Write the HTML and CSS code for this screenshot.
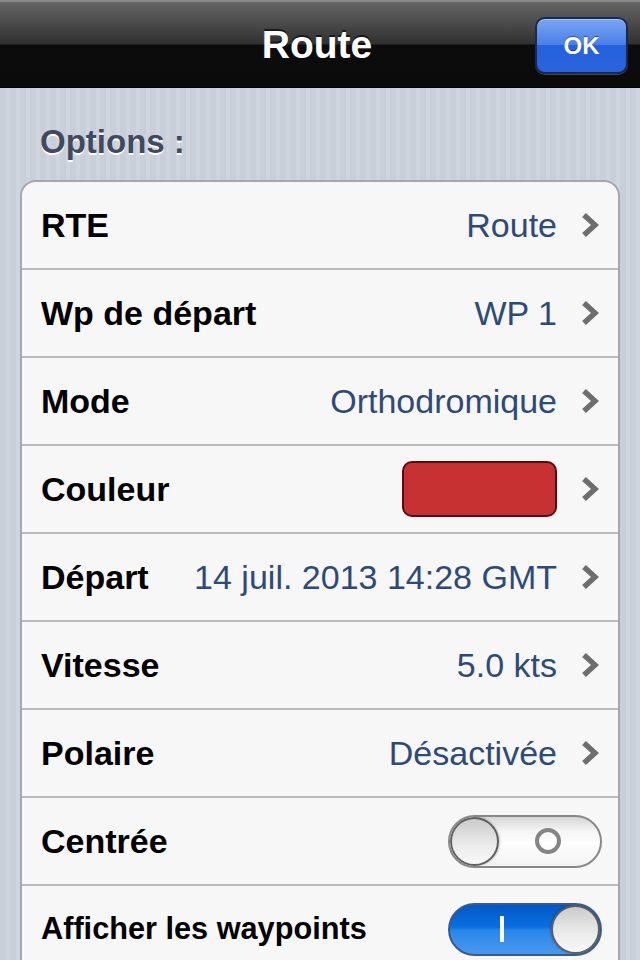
FILE: index.html
```html
<!DOCTYPE html>
<html lang="fr">
<head>
<meta charset="utf-8">
<title>Route</title>
<link rel="stylesheet" href="styles.css">
</head>
<body>
<header class="navbar">
  <span class="spacer"></span>
  <h1 class="title">Route</h1>
  <button class="ok">OK</button>
</header>
<main class="content">
  <h2 class="section-title">Options :</h2>
  <ul class="group">
    <li class="row"><span class="label">RTE</span><span class="value">Route</span><svg class="chevron" viewBox="0 0 18 26"><polyline points="3,3 14,13 3,23"/></svg></li>
    <li class="row"><span class="label">Wp de départ</span><span class="value">WP 1</span><svg class="chevron" viewBox="0 0 18 26"><polyline points="3,3 14,13 3,23"/></svg></li>
    <li class="row"><span class="label">Mode</span><span class="value">Orthodromique</span><svg class="chevron" viewBox="0 0 18 26"><polyline points="3,3 14,13 3,23"/></svg></li>
    <li class="row"><span class="label">Couleur</span><span class="swatch"></span><svg class="chevron" viewBox="0 0 18 26"><polyline points="3,3 14,13 3,23"/></svg></li>
    <li class="row"><span class="label">Départ</span><span class="value">14 juil. 2013 14:28 GMT</span><svg class="chevron" viewBox="0 0 18 26"><polyline points="3,3 14,13 3,23"/></svg></li>
    <li class="row"><span class="label">Vitesse</span><span class="value">5.0 kts</span><svg class="chevron" viewBox="0 0 18 26"><polyline points="3,3 14,13 3,23"/></svg></li>
    <li class="row"><span class="label">Polaire</span><span class="value">Désactivée</span><svg class="chevron" viewBox="0 0 18 26"><polyline points="3,3 14,13 3,23"/></svg></li>
    <li class="row row-switch"><span class="label">Centrée</span>
      <span class="switch off"><span class="knob"></span><span class="track-mark"><span class="mark-o"></span></span></span>
    </li>
    <li class="row row-switch"><span class="label label-small">Afficher les waypoints</span>
      <span class="switch on"><span class="knob"></span><span class="track-mark"><span class="mark-i"></span></span></span>
    </li>
  </ul>
</main>
</body>
</html>
```
FILE: styles.css
```css
html, body {
  margin: 0;
  padding: 0;
}
body {
  width: 640px;
  height: 960px;
  overflow: hidden;
  font-family: "Liberation Sans", Arial, sans-serif;
  background-color: #cbd2dc;
  background-image: repeating-linear-gradient(90deg, #c8cfd9 0px, #c8cfd9 6px, #cfd5df 6px, #cfd5df 10px);
}
.navbar {
  height: 88px;
  box-sizing: border-box;
  display: grid;
  grid-template-columns: 1fr auto 1fr;
  align-items: center;
  padding: 0 12px 0 12px;
  border-top: 2px solid #8a8a8a;
  background: linear-gradient(#666 0px, #4c4c4c 20px, #303030 42px, #0c0c0c 43px, #0b0b0b 100%);
  border-bottom: 1px solid #000;
}
.title {
  margin: 0;
  color: #fff;
  font-size: 39px;
  font-weight: bold;
  line-height: 44px;
  text-shadow: 0 -2px 0 rgba(0,0,0,0.6);
  position: relative;
  left: -3px;
}
.ok {
  justify-self: end;
  width: 93px;
  height: 57px;
  margin-top: 2px;
  border: 2px solid #1a2a4c;
  border-radius: 10px;
  background: linear-gradient(#7aa6f2 0%, #4a7fea 48%, #2561de 50%, #2a63dc 100%);
  color: #fff;
  font-family: "Liberation Sans", Arial, sans-serif;
  font-size: 24px;
  font-weight: bold;
  text-shadow: 0 -1px 0 rgba(0,0,0,0.45);
  box-shadow: 0 1px 0 rgba(255,255,255,0.25), inset 0 1px 0 rgba(255,255,255,0.35);
  padding: 0;
}
.content {
  padding: 34px 20px 0 20px;
}
.section-title {
  margin: 0 0 18px 20px;
  font-size: 33px;
  line-height: 40px;
  font-weight: bold;
  color: #3f495f;
  text-shadow: 0 2px 0 #fff;
}
.group {
  list-style: none;
  margin: 0;
  padding: 0;
  background: #f7f7f7;
  border: 2px solid #a4a8ae;
  border-radius: 16px;
}
.row {
  height: 86px;
  border-bottom: 2px solid #bcbcbc;
  display: flex;
  align-items: center;
  padding: 0 19px 0 19px;
}
.label {
  flex: 1;
  font-size: 34px;
  font-weight: bold;
  color: #000;
  white-space: nowrap;
}
.label-small {
  font-size: 30.7px;
}
.value {
  font-size: 34px;
  color: #2e4a79;
  white-space: nowrap;
}
.chevron {
  width: 18px;
  height: 26px;
  margin-left: 24px;
  flex: none;
}
.chevron polyline {
  fill: none;
  stroke: #6e6e6e;
  stroke-width: 5.5;
  stroke-linejoin: miter;
}
.swatch {
  width: 155px;
  height: 56px;
  box-sizing: border-box;
  border: 2px solid #5c0c0c;
  border-radius: 10px;
  background: #c73132;
}
.row-switch {
  padding-right: 16px;
}
.switch {
  width: 154px;
  height: 53px;
  box-sizing: border-box;
  border-radius: 27px;
  display: flex;
  overflow: hidden;
  border: 2px solid #888;
}
.switch.off {
  background: linear-gradient(#d6d6d6 0%, #f6f6f6 30%, #fcfcfc 50%, #ffffff 52%, #f2f2f2 100%);
}
.switch.on {
  flex-direction: row-reverse;
  border-color: #3a5a8a;
  background: linear-gradient(#0058c6 0%, #0a6ee0 45%, #2b86ea 52%, #4798ee 100%);
}
.knob {
  width: 49px;
  height: 49px;
  flex: none;
  box-sizing: border-box;
  border-radius: 50%;
  border: 2px solid #5e5e5e;
  background: linear-gradient(#cbcbcb, #ececec 60%, #f7f7f7);
  box-shadow: 1px 0 2px rgba(0,0,0,0.2);
}
.switch.on .knob {
  box-shadow: -1px 0 2px rgba(0,0,0,0.2);
}
.track-mark {
  flex: 1;
  display: flex;
  align-items: center;
  justify-content: center;
}
.mark-o {
  width: 26px;
  height: 26px;
  flex: none;
  box-sizing: border-box;
  border: 4px solid #858585;
  border-radius: 50%;
  margin-right: 4px;
}
.mark-i {
  width: 4px;
  height: 26px;
  background: #fff;
  margin-left: 2px;
}
```
